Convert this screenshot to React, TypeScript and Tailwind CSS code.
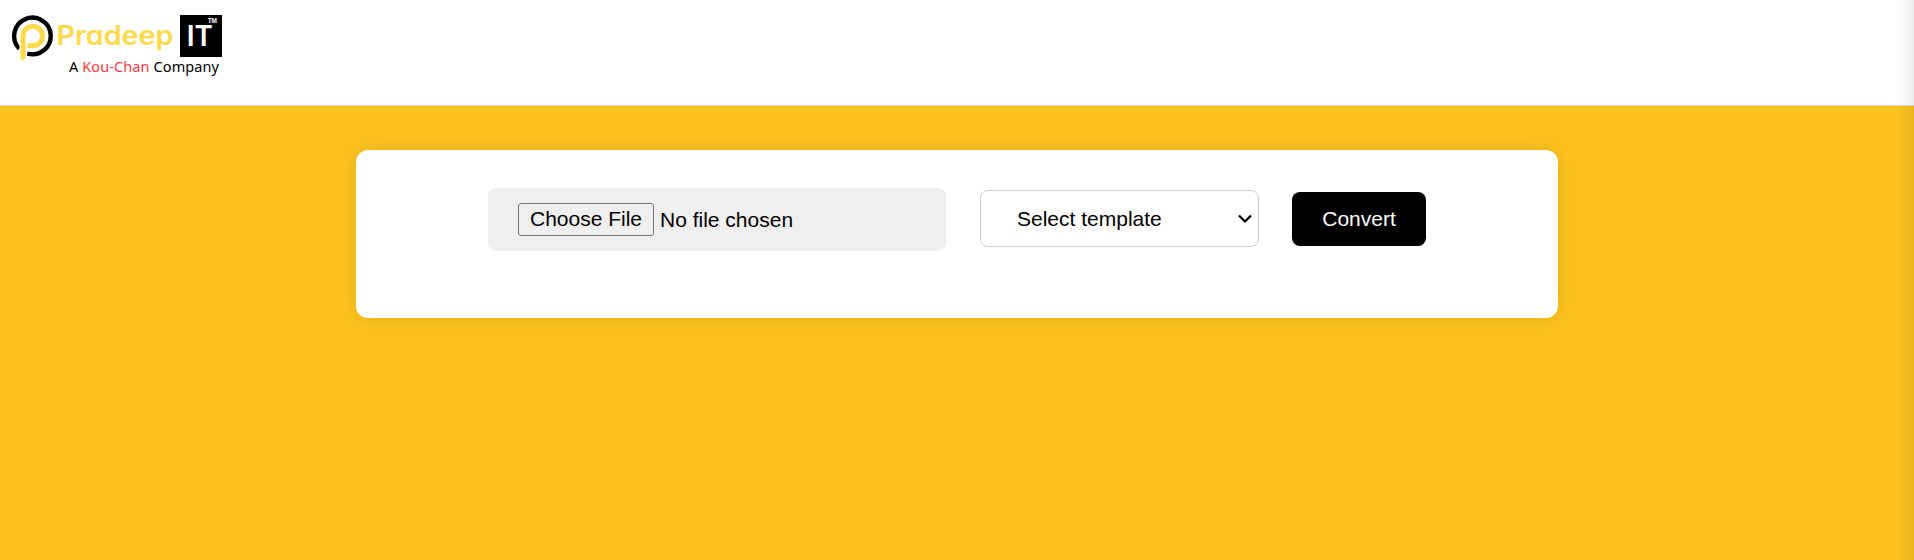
import React from "react";

function Logo() {
  return (
    <svg
      className="block h-[80px] w-[240px]"
      viewBox="0 0 240 80"
      role="img"
      aria-label="Pradeep IT"
    >
      <path d="M19.3 48.7 A18.3 18.3 0 1 1 27.2 53.5" fill="none" stroke="#000" strokeWidth="4.4" />
      <path d="M23 58 V36 A9.8 9.8 0 1 1 32.8 45.8 H29.5" fill="none" stroke="#fff" strokeWidth="7" />
      <path d="M23 57.5 V36 A9.8 9.8 0 1 1 32.8 45.8 H29.5" fill="none" stroke="#fdd94b" strokeWidth="5" strokeLinecap="round" />
      <text x="56.5" y="45.3" textLength="117" lengthAdjust="spacingAndGlyphs" fill="#fdd94b" className="font-['Inter',sans-serif] text-[26.5px] font-semibold [font-feature-settings:'cv11']">
        Pradeep
      </text>
      <rect x="180" y="15" width="42" height="42" fill="#000" />
      <text x="186.5" y="45.8" textLength="25.5" fill="#fff" className="font-['Lato',sans-serif] text-[28px] font-bold">IT</text>
      <text x="207.7" y="22.6" textLength="9.3" lengthAdjust="spacingAndGlyphs" fill="#fff" className="font-['Liberation_Sans',sans-serif] text-[6.5px] font-bold">TM</text>
      <text x="69" y="72.2" textLength="150" className="font-['Noto_Sans',sans-serif] text-[14.5px]">
        A <tspan fill="#ff3b41">Kou-Chan</tspan> Company
      </text>
    </svg>
  );
}

export default function App() {
  return (
    <div className="relative flex h-[560px] w-full flex-col overflow-hidden bg-[#fbc21e] font-['Liberation_Sans',sans-serif] text-[21px] text-black">
      <header className="h-[106px] shrink-0 border-b border-[#d5dae3] bg-white">
        <Logo />
      </header>
      <main className="flex justify-center pt-11">
        <form className="flex h-[168px] w-[1202px] items-start rounded-[12px] bg-white pl-[132px] pt-[38px] shadow-[0_0_20px_rgba(0,0,0,0.1)]">
          <div className="flex h-[63px] w-[458px] items-start rounded-[8px] bg-[#efefef] pl-[30px] pt-[15px]">
            <button type="button" className="h-[33px] w-[136px] whitespace-nowrap rounded-[3px] border border-[#767676] bg-[#efefef] pb-[2px] leading-[29px]">
              Choose File
            </button>
            <span className="ml-[6px] leading-[34px]">No file chosen</span>
          </div>
          <div className="ml-[34px] mt-[2px] flex h-[57px] w-[279px] items-center justify-between rounded-[8px] border border-[#ccc] bg-white pl-9 pr-[6px]">
            <span>Select template</span>
            <svg className="h-[10px] w-[14px]" viewBox="0 0 14 10" fill="none" stroke="#000" strokeWidth="2.2">
              <path d="M1 1.5 L7 7.5 L13 1.5" />
            </svg>
          </div>
          <button type="button" className="ml-[33px] mt-[4px] h-[54px] w-[134px] rounded-[8px] bg-black text-white">
            Convert
          </button>
        </form>
      </main>
      <div className="pointer-events-none absolute inset-y-0 right-0 w-5 bg-linear-to-r from-transparent via-black/2 to-black/7" />
    </div>
  );
}
